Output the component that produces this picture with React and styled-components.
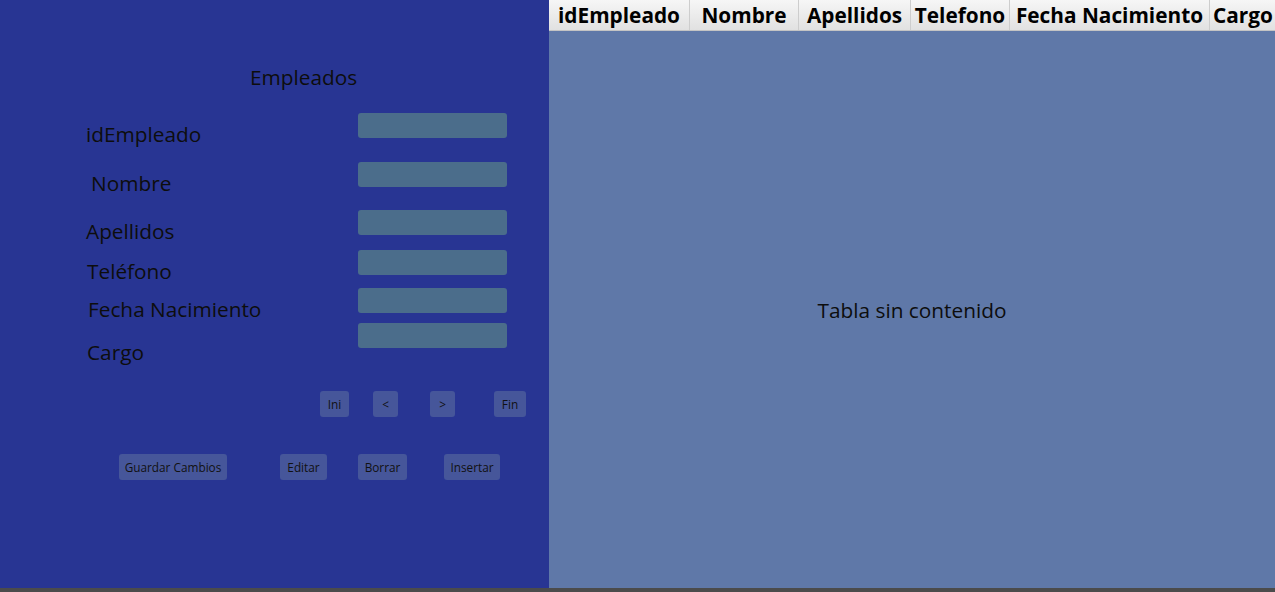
import styled, { createGlobalStyle } from "styled-components";

const GlobalStyle = createGlobalStyle`
  html, body {
    margin: 0;
    padding: 0;
    background: #4b4b4b;
  }
  body {
    font-family: "Open Sans", "Noto Sans", sans-serif;
    color: #0d0d0d;
  }
`;

const Screen = styled.div`
  width: 1275px;
  height: 592px;
  display: flex;
  flex-direction: column;
  overflow: hidden;
`;

const Main = styled.div`
  display: flex;
  height: 588px;
`;

const StatusStrip = styled.div`
  height: 4px;
  background: #4b4b4b;
`;

const FormPanel = styled.section`
  width: 549px;
  flex-shrink: 0;
  background: #283593;
  display: flex;
  flex-direction: column;
`;

const Title = styled.h1`
  margin: 63px 0 0 250px;
  font-size: 20.8px;
  font-weight: 400;
  line-height: 28px;
  color: #0d0d0d;
`;

const Fields = styled.div`
  display: flex;
  flex-direction: column;
  padding-left: 86px;
  margin-top: 22px;
`;

const FieldRow = styled.div`
  display: flex;
  height: 25px;
  margin-top: ${(p) => p.$top}px;
`;

const FieldLabel = styled.label`
  width: ${(p) => 272 - p.$indent}px;
  flex-shrink: 0;
  padding-left: ${(p) => p.$indent}px;
  margin-top: ${(p) => p.$drop}px;
  font-size: 20.8px;
  line-height: 27px;
  height: 27px;
  white-space: nowrap;
`;

const FieldInput = styled.div`
  width: 149px;
  height: 25px;
  border-radius: 3px;
  background: #4b6d8b;
`;

const ButtonRow = styled.div`
  display: flex;
  margin-top: ${(p) => p.$top}px;
`;

const SmallButton = styled.button`
  width: ${(p) => p.$w}px;
  height: 26px;
  margin-left: ${(p) => p.$left}px;
  padding: 0;
  border: none;
  border-radius: 3px;
  background: #46569a;
  color: #111;
  font-family: "Open Sans", "Noto Sans", sans-serif;
  font-size: 11.8px;
  white-space: nowrap;
`;

const TablePanel = styled.section`
  flex: 1;
  min-width: 0;
  display: flex;
  flex-direction: column;
  background: #5f78a8;
`;

const HeaderRow = styled.div`
  display: flex;
  height: 30px;
  background: linear-gradient(#f6f6f6, #e1e1e1);
  border-bottom: 1px solid #c4c4c4;
  overflow: hidden;
`;

const HeaderCell = styled.div`
  width: ${(p) => p.$w}px;
  flex-shrink: 0;
  border-right: 1px solid #cdcdcd;
  box-sizing: border-box;
  display: flex;
  align-items: center;
  justify-content: center;
  font-size: 20.8px;
  font-weight: 700;
  color: #000;
  white-space: nowrap;
`;

const EmptyBody = styled.div`
  flex: 1;
  display: flex;
  align-items: center;
  justify-content: center;
  font-size: 20.8px;
  color: #0d0d0d;
`;

const fields = [
  { label: "idEmpleado", top: 0, drop: 8, indent: 0 },
  { label: "Nombre", top: 24, drop: 8, indent: 5 },
  { label: "Apellidos", top: 23, drop: 8, indent: 0 },
  { label: "Teléfono", top: 15, drop: 8, indent: 1 },
  { label: "Fecha Nacimiento", top: 13, drop: 8, indent: 2 },
  { label: "Cargo", top: 10, drop: 16, indent: 1 },
];

const columns = [
  { name: "idEmpleado", w: 141 },
  { name: "Nombre", w: 109 },
  { name: "Apellidos", w: 112 },
  { name: "Telefono", w: 99 },
  { name: "Fecha Nacimiento", w: 200 },
  { name: "Cargo", w: 67 },
];

export default function App() {
  return (
    <>
      <GlobalStyle />
      <Screen>
        <Main>
          <FormPanel>
            <Title>Empleados</Title>
            <Fields>
              {fields.map((f) => (
                <FieldRow key={f.label} $top={f.top}>
                  <FieldLabel $drop={f.drop} $indent={f.indent}>
                    {f.label}
                  </FieldLabel>
                  <FieldInput />
                </FieldRow>
              ))}
            </Fields>
            <ButtonRow $top={43}>
              <SmallButton $left={320} $w={29}>Ini</SmallButton>
              <SmallButton $left={24} $w={25}>&lt;</SmallButton>
              <SmallButton $left={32} $w={25}>&gt;</SmallButton>
              <SmallButton $left={39} $w={32}>Fin</SmallButton>
            </ButtonRow>
            <ButtonRow $top={37}>
              <SmallButton $left={119} $w={108}>Guardar Cambios</SmallButton>
              <SmallButton $left={53} $w={47}>Editar</SmallButton>
              <SmallButton $left={31} $w={49}>Borrar</SmallButton>
              <SmallButton $left={37} $w={56}>Insertar</SmallButton>
            </ButtonRow>
          </FormPanel>
          <TablePanel>
            <HeaderRow>
              {columns.map((c) => (
                <HeaderCell key={c.name} $w={c.w}>
                  {c.name}
                </HeaderCell>
              ))}
            </HeaderRow>
            <EmptyBody>Tabla sin contenido</EmptyBody>
          </TablePanel>
        </Main>
        <StatusStrip />
      </Screen>
    </>
  );
}
